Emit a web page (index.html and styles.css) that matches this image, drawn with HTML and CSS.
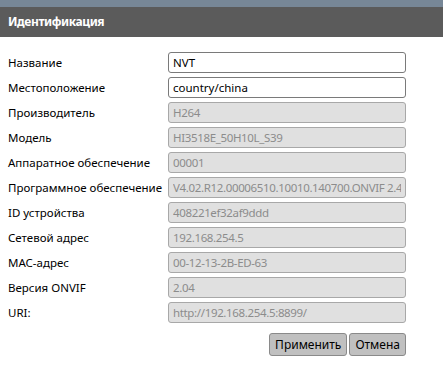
FILE: index.html
```html
<!DOCTYPE html>
<html lang="ru">
<head>
<meta charset="UTF-8" />
<title>Идентификация</title>
<link rel="stylesheet" href="styles.css">
</head>
<body>
<div class="top-strip"></div>
<div class="panel-title">Идентификация</div>
<form class="ident-form">
    <label>Название</label>
    <input type="text" class="field" value="NVT" />
    <label>Местоположение</label>
    <input type="text" class="field" value="country/china" />
    <label>Производитель</label>
    <input type="text" class="field" disabled value="H264" />
    <label>Модель</label>
    <input type="text" class="field" disabled value="HI3518E_50H10L_S39" />
    <label>Аппаратное обеспечение</label>
    <input type="text" class="field" disabled value="00001" />
    <label>Программное обеспечение</label>
    <input type="text" class="field" disabled value="V4.02.R12.00006510.10010.140700.ONVIF 2.4" />
    <label>ID устройства</label>
    <input type="text" class="field" disabled value="408221ef32af9ddd" />
    <label>Сетевой адрес</label>
    <input type="text" class="field" disabled value="192.168.254.5" />
    <label>MAC-адрес</label>
    <input type="text" class="field" disabled value="00-12-13-2B-ED-63" />
    <label>Версия ONVIF</label>
    <input type="text" class="field" disabled value="2.04" />
    <label>URI:</label>
    <input type="text" class="field" disabled value="http://192.168.254.5:8899/" />
    <div class="actions">
        <button type="button" class="btn">Применить</button>
        <button type="button" class="btn">Отмена</button>
    </div>
</form>
</body>
</html>
```

FILE: styles.css
```css
body {
    margin: 0;
    background: #fff;
    color: #000;
    font-family: "Noto Sans", "Open Sans", sans-serif;
    font-size: 11.5px;
}
.top-strip {
    height: 7px;
    background: #778797;
}
.panel-title {
    height: 30px;
    line-height: 30px;
    padding-left: 8px;
    background: #5b5b5b;
    color: #fff;
    font-weight: bold;
    font-size: 12px;
    letter-spacing: -0.4px;
}
.ident-form {
    display: grid;
    grid-template-columns: 160px 238px;
    row-gap: 4px;
    padding: 15px 0 0 8px;
}
.ident-form label {
    line-height: 21px;
    white-space: nowrap;
}
.field {
    box-sizing: border-box;
    height: 21px;
    width: 238px;
    margin: 0;
    padding: 0 4px;
    font: inherit;
    color: #000;
    background: #fff;
    border: 1px solid #7a7a7a;
    border-radius: 3px;
    outline: none;
}
.field:disabled {
    background: #e0e0e0;
    border-color: #a8a8a8;
    color: #8c8c8c;
    letter-spacing: -0.35px;
}
.actions {
    grid-column: 1 / 3;
    display: flex;
    justify-content: flex-end;
    gap: 2px;
    margin-top: 6px;
}
.btn {
    height: 23px;
    padding: 0 5px;
    font: inherit;
    font-size: 12px;
    color: #000;
    background: #c0c0c0;
    border: 1px solid #8a8a8a;
    border-radius: 3px;
}
```
